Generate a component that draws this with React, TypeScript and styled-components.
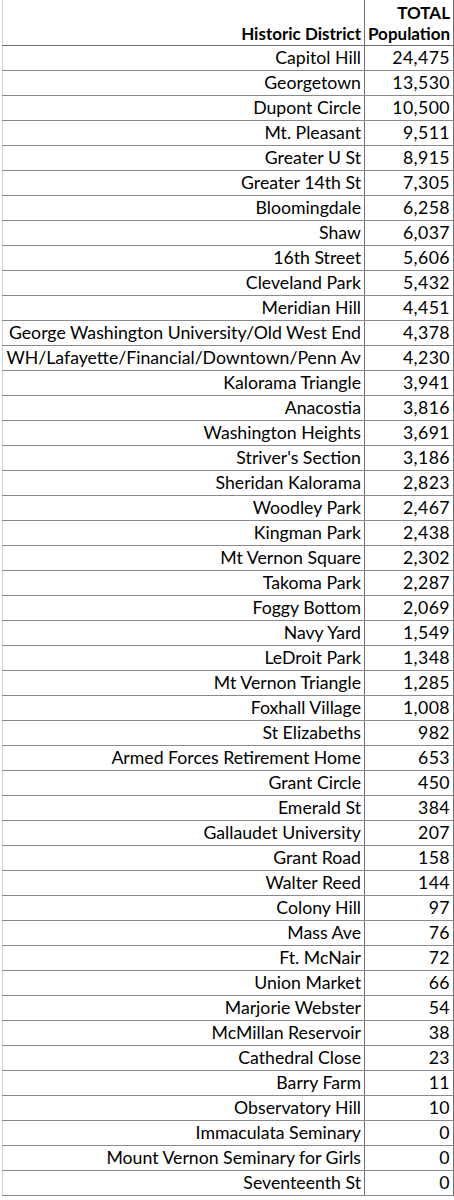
import * as React from 'react'
import styled, { createGlobalStyle } from 'styled-components'

const GlobalStyle = createGlobalStyle`
  body {
    margin: 0;
    background: #fff;
  }
`

const Sheet = styled.table`
  border-collapse: collapse;
  margin-left: 2px;
  font-family: Lato, 'Open Sans', 'Liberation Sans', sans-serif;
  font-size: 17.7px;
  color: #000;
  table-layout: fixed;
  width: 451px;
`

const HeadCell = styled.th<{ first?: boolean }>`
  height: 44px;
  padding: 0 3px 1px;
  text-align: right;
  vertical-align: bottom;
  font-weight: 700;
  font-size: 17px;
  line-height: 21px;
  border-left: 1px solid ${p => (p.first ? '#d4d4d4' : '#6f6f6f')};
  border-right: 1px solid #6f6f6f;
  border-bottom: 1px solid #6f6f6f;
  white-space: nowrap;
`

const Cell = styled.td<{ first?: boolean }>`
  height: 24px;
  padding: 0 3px;
  text-align: right;
  line-height: 24px;
  border-left: 1px solid ${p => (p.first ? '#d4d4d4' : '#6f6f6f')};
  border-right: 1px solid #6f6f6f;
  border-bottom: 1px solid #8a8a8a;
  white-space: nowrap;
`

const Num = styled(Cell)`
  letter-spacing: 0.4px;
`

const rows: [string, string][] = [
  ['Capitol Hill', '24,475'],
  ['Georgetown', '13,530'],
  ['Dupont Circle', '10,500'],
  ['Mt. Pleasant', '9,511'],
  ['Greater U St', '8,915'],
  ['Greater 14th St', '7,305'],
  ['Bloomingdale', '6,258'],
  ['Shaw', '6,037'],
  ['16th Street', '5,606'],
  ['Cleveland Park', '5,432'],
  ['Meridian Hill', '4,451'],
  ['George Washington University/Old West End', '4,378'],
  ['WH/Lafayette/Financial/Downtown/Penn Av', '4,230'],
  ['Kalorama Triangle', '3,941'],
  ['Anacostia', '3,816'],
  ['Washington Heights', '3,691'],
  ["Striver's Section", '3,186'],
  ['Sheridan Kalorama', '2,823'],
  ['Woodley Park', '2,467'],
  ['Kingman Park', '2,438'],
  ['Mt Vernon Square', '2,302'],
  ['Takoma Park', '2,287'],
  ['Foggy Bottom', '2,069'],
  ['Navy Yard', '1,549'],
  ['LeDroit Park', '1,348'],
  ['Mt Vernon Triangle', '1,285'],
  ['Foxhall Village', '1,008'],
  ['St Elizabeths', '982'],
  ['Armed Forces Retirement Home', '653'],
  ['Grant Circle', '450'],
  ['Emerald St', '384'],
  ['Gallaudet University', '207'],
  ['Grant Road', '158'],
  ['Walter Reed', '144'],
  ['Colony Hill', '97'],
  ['Mass Ave', '76'],
  ['Ft. McNair', '72'],
  ['Union Market', '66'],
  ['Marjorie Webster', '54'],
  ['McMillan Reservoir', '38'],
  ['Cathedral Close', '23'],
  ['Barry Farm', '11'],
  ['Observatory Hill', '10'],
  ['Immaculata Seminary', '0'],
  ['Mount Vernon Seminary for Girls', '0'],
  ['Seventeenth St', '0'],
]

export default function App() {
  return (
    <>
      <GlobalStyle />
      <Sheet>
        <colgroup>
          <col style={{ width: 362 }} />
          <col style={{ width: 89 }} />
        </colgroup>
        <thead>
          <tr>
            <HeadCell first>Historic District</HeadCell>
            <HeadCell>
              TOTAL
              <br />
              Population
            </HeadCell>
          </tr>
        </thead>
        <tbody>
          {rows.map(([name, pop]) => (
            <tr key={name}>
              <Cell first>{name}</Cell>
              <Num>{pop}</Num>
            </tr>
          ))}
        </tbody>
      </Sheet>
    </>
  )
}
